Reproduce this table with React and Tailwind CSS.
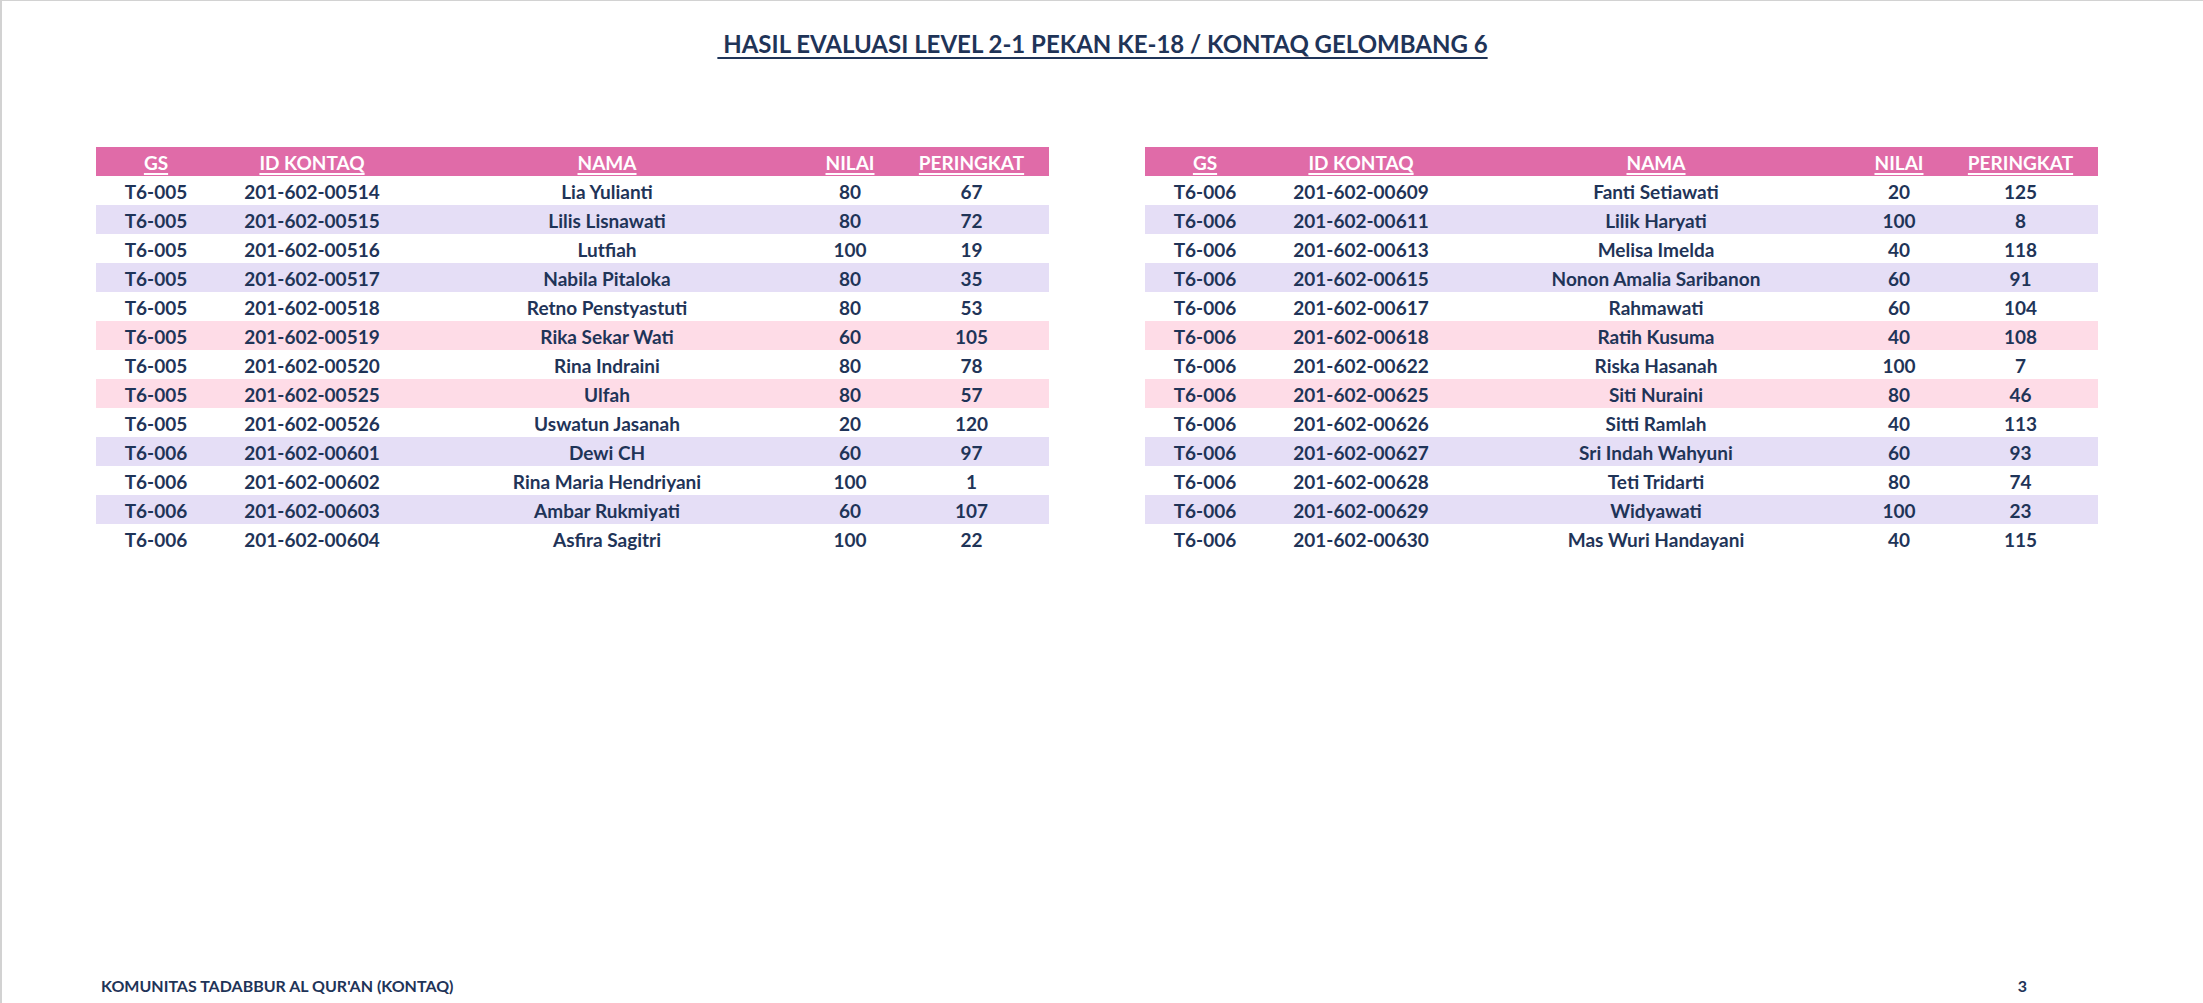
import React from "react";

// baris: [gs, id, nama, nilai, peringkat, warna]
const LEFT = [
  ["T6-005", "201-602-00514", "Lia Yulianti", 80, 67, "w"],
  ["T6-005", "201-602-00515", "Lilis Lisnawati", 80, 72, "l"],
  ["T6-005", "201-602-00516", "Lutfiah", 100, 19, "w"],
  ["T6-005", "201-602-00517", "Nabila Pitaloka", 80, 35, "l"],
  ["T6-005", "201-602-00518", "Retno Penstyastuti", 80, 53, "w"],
  ["T6-005", "201-602-00519", "Rika Sekar Wati", 60, 105, "p"],
  ["T6-005", "201-602-00520", "Rina Indraini", 80, 78, "w"],
  ["T6-005", "201-602-00525", "Ulfah", 80, 57, "p"],
  ["T6-005", "201-602-00526", "Uswatun Jasanah", 20, 120, "w"],
  ["T6-006", "201-602-00601", "Dewi CH", 60, 97, "l"],
  ["T6-006", "201-602-00602", "Rina Maria Hendriyani", 100, 1, "w"],
  ["T6-006", "201-602-00603", "Ambar Rukmiyati", 60, 107, "l"],
  ["T6-006", "201-602-00604", "Asfira Sagitri", 100, 22, "w"],
];

const RIGHT = [
  ["T6-006", "201-602-00609", "Fanti Setiawati", 20, 125, "w"],
  ["T6-006", "201-602-00611", "Lilik Haryati", 100, 8, "l"],
  ["T6-006", "201-602-00613", "Melisa Imelda", 40, 118, "w"],
  ["T6-006", "201-602-00615", "Nonon Amalia Saribanon", 60, 91, "l"],
  ["T6-006", "201-602-00617", "Rahmawati", 60, 104, "w"],
  ["T6-006", "201-602-00618", "Ratih Kusuma", 40, 108, "p"],
  ["T6-006", "201-602-00622", "Riska Hasanah", 100, 7, "w"],
  ["T6-006", "201-602-00625", "Siti Nuraini", 80, 46, "p"],
  ["T6-006", "201-602-00626", "Sitti Ramlah", 40, 113, "w"],
  ["T6-006", "201-602-00627", "Sri Indah Wahyuni", 60, 93, "l"],
  ["T6-006", "201-602-00628", "Teti Tridarti", 80, 74, "w"],
  ["T6-006", "201-602-00629", "Widyawati", 100, 23, "l"],
  ["T6-006", "201-602-00630", "Mas Wuri Handayani", 40, 115, "w"],
];

const BG = { w: "bg-white", l: "bg-[#e5def6]", p: "bg-[#fedce7]" };
const COLS = ["w-[120px]", "w-[192px]", "w-[398px]", "w-[88px]", "w-[155px]"];
const HEAD = ["GS", "ID KONTAQ", "NAMA", "NILAI", "PERINGKAT"];

function Table({ rows }) {
  return (
    <div className="w-[953px] shrink-0">
      <div className="flex h-[29px] items-center bg-[#e06ba8] text-white">
        {HEAD.map((h, i) => (
          <div key={h} className={`${COLS[i]} text-center pt-[1px]`}>
            <span className="underline underline-offset-[3px] decoration-[1.5px]">{h}</span>
          </div>
        ))}
      </div>
      {rows.map(r => (
        <div key={r[1]} className={`flex h-[29px] items-center pt-[2px] ${BG[r[5]]}`}>
          {r.slice(0, 5).map((c, i) => (
            <div key={i} className={`${COLS[i]} text-center whitespace-nowrap`}>{c}</div>
          ))}
        </div>
      ))}
    </div>
  );
}

export default function App() {
  return (
    <div className="h-[1003px] w-full bg-white border-t border-l-2 border-[#d2d2d2] flex flex-col text-[#1f3458] font-bold font-['Lato','Liberation_Sans',sans-serif] text-[19px] leading-none">
      {/* ── Judul ── */}
      <div className="pt-[31px] text-center">
        <span className="text-[24px] underline underline-offset-[4px] decoration-2 whitespace-pre">
          {" HASIL EVALUASI LEVEL 2-1 PEKAN KE-18 / KONTAQ GELOMBANG 6"}
        </span>
      </div>

      {/* ── Tabel ── */}
      <div className="flex gap-[96px] pl-[94px] mt-[91px]">
        <Table rows={LEFT} />
        <Table rows={RIGHT} />
      </div>

      {/* ── Footer ── */}
      <div className="mt-auto flex items-end justify-between pl-[99px] pr-[176px] pb-[9px] text-[16px]">
        <span>KOMUNITAS TADABBUR AL QUR'AN (KONTAQ)</span>
        <span>3</span>
      </div>
    </div>
  );
}
